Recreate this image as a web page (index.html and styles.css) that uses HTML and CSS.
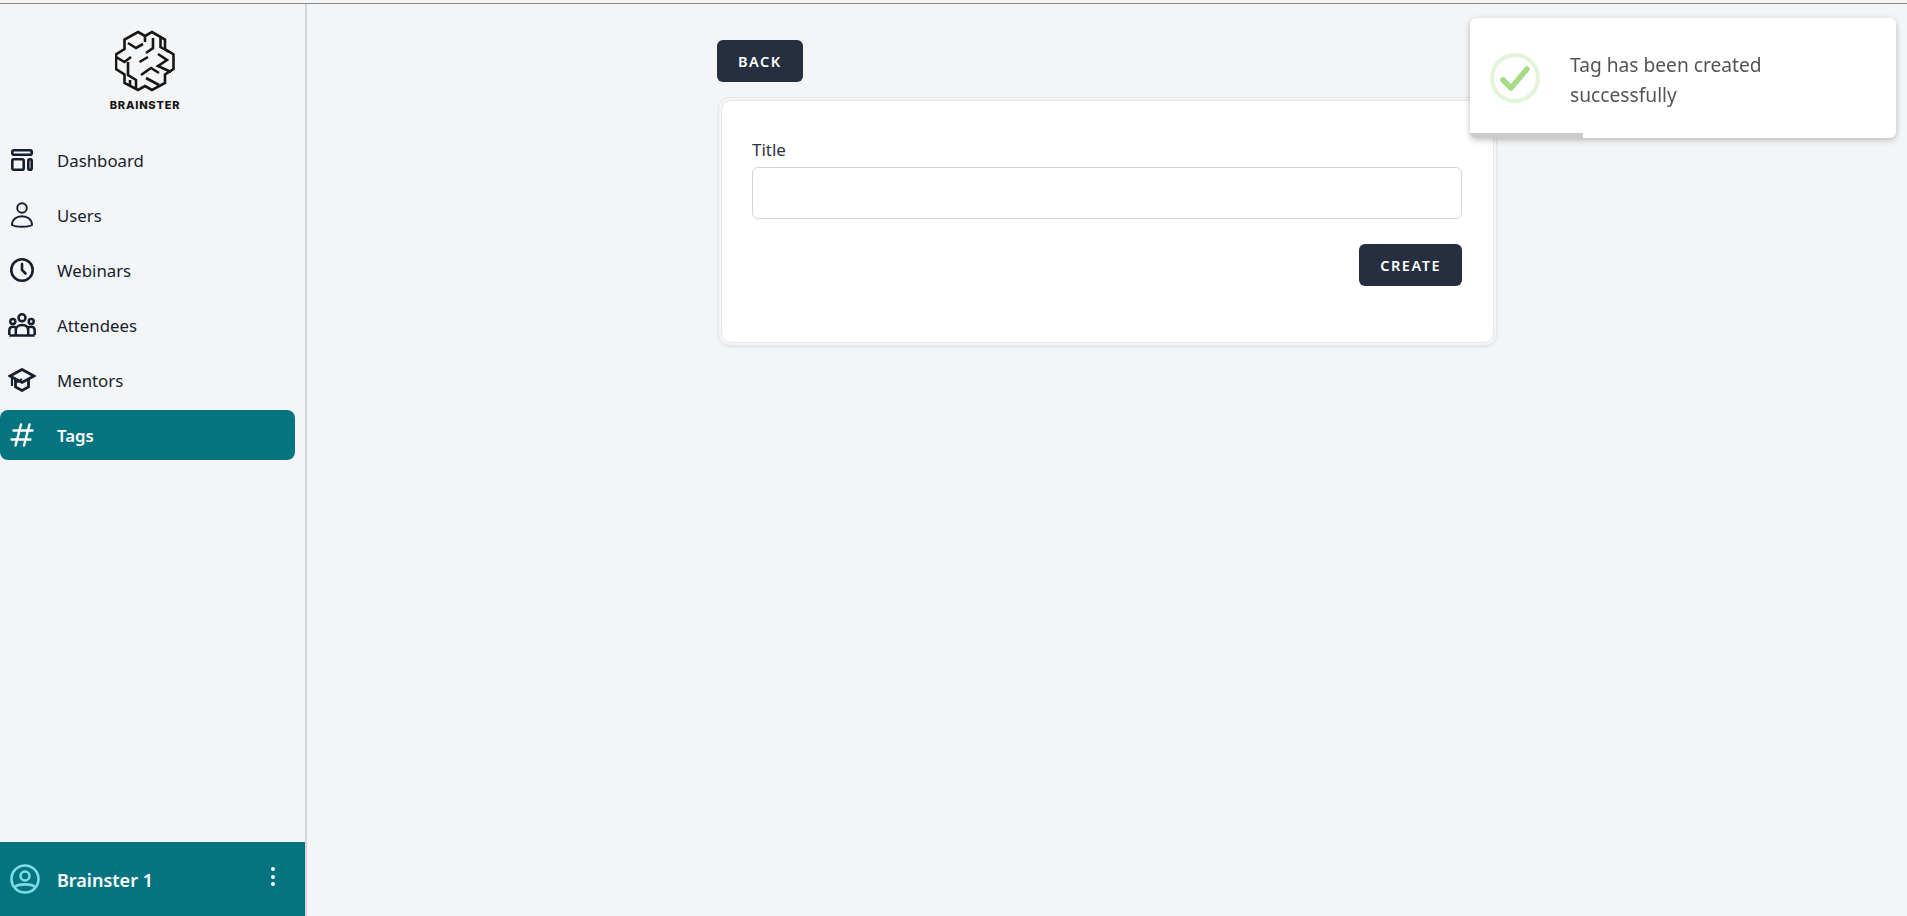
FILE: index.html
```html
<!DOCTYPE html>
<html lang="en">
<head>
    <meta charset="UTF-8">
    <meta name="viewport" content="width=device-width, initial-scale=1.0">
    <title>Create Tag</title>
    <link rel="stylesheet" href="styles.css">
</head>
<body>

<div class="topline"></div>

<div class="app">
    <aside class="sidebar">
        <div class="brand">
            <svg class="brand-logo" viewBox="0 0 60 62" fill="none" stroke="currentColor" stroke-width="2.600" stroke-linejoin="miter">
                <path d="M23 2 L30 6 L37 2 L50 9.500 L50 19 L58.500 24.500 L58.500 39 L50 44.500 L50 53 L37 60 L30 56 L23 60 L9.500 53 L9.500 44.500 L1 39 L1 24.500 L9.500 19 L9.500 9.500 Z"/>
                <path d="M13 13 L21 18 L28 14"/>
                <path d="M30 6 L30 12"/>
                <path d="M38 8 L38 18 L31 23"/>
                <path d="M45.500 8 L45.500 17 L54 22"/>
                <path d="M1 27 L9.500 32 L16 27"/>
                <path d="M24.500 32 L33 27"/>
                <path d="M43 24 L52 30 L43 36 L56 42"/>
                <path d="M13 32 L13 45 L21 50 L21 59"/>
                <path d="M15 50 L15 55"/>
                <path d="M26 45 L36 38 L44 43"/>
                <path d="M31 48 L44 55"/>
            </svg>
            <span class="brand-name">BRAINSTER</span>
        </div>

        <nav class="menu">
            <a class="menu-item" href="#">
                <svg class="menu-icon" viewBox="0 0 24 24" fill="none" stroke="currentColor" stroke-width="2.600">
                    <rect x="2.300" y="2.300" width="19.400" height="4.400" rx="1.500"/>
                    <rect x="2.300" y="11.300" width="11.400" height="10.400" rx="1.500"/>
                    <rect x="18.300" y="11.300" width="3.400" height="10.400" rx="1.500"/>
                </svg>
                Dashboard
            </a>
            <a class="menu-item" href="#">
                <svg class="menu-icon menu-icon-tall" viewBox="0 0 24 26" fill="none" stroke="currentColor" stroke-width="1.900">
                    <circle cx="12" cy="6" r="4.800"/>
                    <path d="M2 23 C2 17.500 6.500 14.300 12 14.300 C17.500 14.300 22 17.500 22 23 C18 25.300 6 25.300 2 23 Z"/>
                </svg>
                Users
            </a>
            <a class="menu-item" href="#">
                <svg class="menu-icon" viewBox="0 0 24 24" fill="none" stroke="currentColor" stroke-width="2.600" stroke-linecap="round">
                    <circle cx="12" cy="12" r="10.700"/>
                    <path d="M12 6 L12 12 L15.500 15.500"/>
                </svg>
                Webinars
            </a>
            <a class="menu-item" href="#">
                <svg class="menu-icon menu-icon-wide" viewBox="0 0 28 24" fill="none" stroke="currentColor" stroke-width="2.500">
                    <circle cx="14" cy="4.800" r="3.500"/>
                    <circle cx="4.800" cy="8.500" r="2.500"/>
                    <circle cx="23.200" cy="8.500" r="2.500"/>
                    <path d="M7.800 22 L7.800 17.500 C7.800 13.800 10.500 12 14 12 C17.500 12 20.200 13.800 20.200 17.500 L20.200 22"/>
                    <path d="M1.300 22 L1.300 17.500 C1.300 15 3 13.800 5 13.800 C6 13.800 7 14 8 14.800 M26.700 22 L26.700 17.500 C26.700 15 25 13.800 23 13.800 C22 13.800 21 14 20 14.800"/>
                    <path d="M1.300 22.500 L26.700 22.500"/>
                </svg>
                Attendees
            </a>
            <a class="menu-item" href="#">
                <svg class="menu-icon menu-icon-wide" viewBox="0 0 28 24" fill="none" stroke="currentColor" stroke-width="2.800">
                    <path d="M14 1.500 L26 8 L14 14.500 L2 8 Z"/>
                    <path d="M7.500 11 L7.500 19 L14 22.500 L20.500 19 L20.500 11"/>
                    <path d="M4 9 L4 18" stroke-width="2.200"/>
                    <path d="M9 14.500 L14 11" stroke-width="2"/>
                </svg>
                Mentors
            </a>
            <a class="menu-item is-active" href="#">
                <svg class="menu-icon" viewBox="0 0 24 24" fill="none" stroke="currentColor" stroke-width="2.400" stroke-linecap="round">
                    <path d="M11 1.500 L5.500 22.500 M19.500 1.500 L14 22.500 M3.500 7.500 L22.500 7.500 M1.500 16.500 L20.500 16.500"/>
                </svg>
                Tags
            </a>
        </nav>

        <div class="account">
            <svg class="account-icon" viewBox="0 0 30 30" fill="none" stroke="currentColor" stroke-width="2.600">
                <circle cx="15" cy="15" r="13.500"/>
                <circle cx="15" cy="12" r="4.500"/>
                <path d="M5 23 C8 19.500 22 19.500 25 23"/>
            </svg>
            <span class="account-name">Brainster 1</span>
            <span class="account-dots"><i></i><i></i><i></i></span>
        </div>
    </aside>

    <main class="content">
        <div class="wrapper">
            <a class="btn" href="#">Back</a>

            <div class="card-frame">
                <form class="card">
                    <label class="field-label" for="title">Title</label>
                    <input class="field-input" type="text" id="title" name="title">
                    <div class="form-actions">
                        <button class="btn" type="submit">Create</button>
                    </div>
                </form>
            </div>
        </div>
    </main>
</div>

<div class="toast">
    <svg class="toast-icon" viewBox="0 0 50 50" fill="none">
        <circle cx="25" cy="25" r="23" stroke="#e4f4d9" stroke-width="4"/>
        <path d="M13 27 L21 35 L37 16" stroke="#a5dc86" stroke-width="5.500" stroke-linecap="round" stroke-linejoin="round"/>
    </svg>
    <p class="toast-text">Tag has been created successfully</p>
    <div class="toast-progress"></div>
</div>

</body>
</html>
```

FILE: styles.css
```css
* {
    margin: 0;
    padding: 0;
    box-sizing: border-box;
}

html, body {
    height: 100%;
    overflow: hidden;
}

body {
    font-family: "Noto Sans", "Open Sans", Arial, sans-serif;
    background-color: #f4f5f7;
    color: #161e2e;
    display: flex;
    flex-direction: column;
}

.topline {
    height: 4px;
    flex-shrink: 0;
    border-bottom: 1px solid #8b8b8b;
}

.app {
    flex: 1;
    display: flex;
    min-height: 0;
}

/* Sidebar */
.sidebar {
    width: 307px;
    flex-shrink: 0;
    display: flex;
    flex-direction: column;
    border-right: 2px solid #d2d6dc;
}

.brand {
    display: flex;
    flex-direction: column;
    align-items: center;
    padding-top: 26px;
    padding-right: 15px;
    padding-bottom: 23px;
    color: #161616;
}

.brand-logo {
    width: 60px;
    height: 62px;
}

.brand-name {
    margin-top: 7px;
    font-family: Inter, Arial, sans-serif;
    font-size: 11px;
    line-height: 13px;
    font-weight: 800;
    letter-spacing: 0.800px;
}

.menu {
    display: flex;
    flex-direction: column;
    gap: 5px;
    padding-right: 10px;
}

.menu-item {
    height: 50px;
    display: flex;
    align-items: center;
    gap: 23px;
    padding-left: 10px;
    border-radius: 0 8px 8px 0;
    color: #161e2e;
    font-size: 16.800px;
    text-decoration: none;
}

.menu-item.is-active {
    background-color: #047481;
    color: #fff;
    font-weight: 600;
    border-radius: 8px;
}

.menu-icon {
    width: 24px;
    height: 24px;
    flex-shrink: 0;
}

.menu-icon-tall {
    height: 26px;
}

.menu-icon-wide {
    width: 28px;
    margin-left: -2px;
    margin-right: -2px;
}

.account {
    margin-top: auto;
    height: 74px;
    display: flex;
    align-items: center;
    padding: 0 30px 0 10px;
    background-color: #047481;
    color: #fff;
}

.account-icon {
    width: 30px;
    height: 30px;
    color: #7edce2;
    flex-shrink: 0;
}

.account-name {
    margin-left: 17px;
    margin-top: 1px;
    font-size: 18px;
    font-weight: 600;
}

.account-dots {
    margin-left: auto;
    display: flex;
    flex-direction: column;
    gap: 3.500px;
    margin-top: -5px;
}

.account-dots i {
    display: block;
    width: 4px;
    height: 4px;
    border-radius: 50%;
    background-color: #fff;
}

/* Main */
.content {
    flex: 1;
    display: flex;
    justify-content: center;
    min-width: 0;
}

.wrapper {
    width: 780px;
    padding-top: 36px;
}

.btn {
    display: inline-flex;
    align-items: center;
    height: 42px;
    padding: 0 21px;
    border: none;
    border-radius: 6px;
    background-color: #252f3f;
    color: #fff;
    font-family: inherit;
    font-size: 14.500px;
    font-weight: 600;
    letter-spacing: 1.500px;
    text-transform: uppercase;
    text-decoration: none;
}

.card-frame {
    margin-top: 15px;
    margin-left: 1px;
    padding: 2px;
    border: 1px solid #e5e7eb;
    border-radius: 12px;
    box-shadow: 0 1px 3px rgba(0, 0, 0, 0.08);
}

.card {
    display: flex;
    flex-direction: column;
    padding: 37px 31px 56px 30px;
    background-color: #fff;
    border: 1px solid #e5e7eb;
    border-radius: 10px;
}

.field-label {
    font-size: 17px;
    line-height: 24px;
    color: #2d3340;
    margin-bottom: 5px;
}

.field-input {
    width: 100%;
    height: 52px;
    border: 1px solid #d2d6dc;
    border-radius: 6px;
    background-color: #fff;
    outline: none;
}

.form-actions {
    display: flex;
    justify-content: flex-end;
    margin-top: 25px;
}

/* Toast */
.toast {
    position: fixed;
    top: 18px;
    right: 11px;
    width: 426px;
    height: 120px;
    display: flex;
    align-items: center;
    gap: 30px;
    padding-left: 20px;
    background-color: #fff;
    border-radius: 6px;
    box-shadow: 0 2px 6px rgba(0, 0, 0, 0.25);
    overflow: hidden;
}

.toast-icon {
    width: 50px;
    height: 50px;
    flex-shrink: 0;
}

.toast-text {
    width: 280px;
    margin-top: 3px;
    font-size: 19.200px;
    line-height: 30px;
    color: #545454;
}

.toast-progress {
    position: absolute;
    left: 0;
    bottom: 0;
    width: 113px;
    height: 5px;
    background-color: #cccccc;
}
```
